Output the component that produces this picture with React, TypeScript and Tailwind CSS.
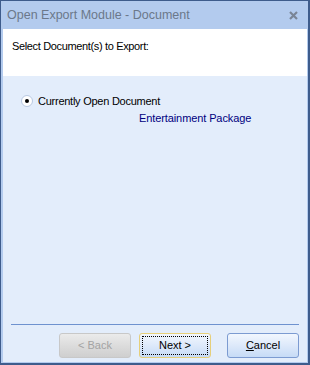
export default function App() {
  const font = { fontFamily: '"Liberation Sans", Arial, sans-serif' };
  return (
    <div
      className="w-[310px] h-[365px] flex flex-col bg-[#b3cbee] border-t border-l border-r-2 border-b-2 border-[#3e5c8c] pl-[2px] pr-[1px] pb-[1px]"
      style={font}
    >
      <div className="h-[28px] shrink-0 flex items-center justify-between pl-[4px] pr-[9px]">
        <span className="text-[12.5px] text-[#6b788a]">Open Export Module - Document</span>
        <svg width="9" height="9" viewBox="0 0 9 9" className="mt-[1px]">
          <path d="M1 1 L8 8 M8 1 L1 8" stroke="#7a8596" strokeWidth="2.2" />
        </svg>
      </div>
      <div className="h-[47px] shrink-0 bg-white pl-[9px] pt-[4px]">
        <span className="text-[11px] tracking-[-0.35px] text-black">Select Document(s) to Export:</span>
      </div>
      <div className="flex-1 flex flex-col bg-[#e3edfb]">
        <div className="flex items-center mt-[17px] ml-[18px] gap-[5px]">
          <span className="w-[12px] h-[12px] rounded-full bg-white border border-[#b9c9e2] flex items-center justify-center">
            <span className="w-[4px] h-[4px] rounded-full bg-black" />
          </span>
          <span className="text-[11px] tracking-[-0.25px] text-black">Currently Open Document</span>
        </div>
        <div className="ml-[136px] mt-0 text-[11px] tracking-[-0.1px] text-[#00007f]">Entertainment Package</div>
        <div className="flex-1" />
        <div className="mx-[8px] h-px bg-[#6e92cf]" />
        <div className="flex justify-end mt-[8px] mb-[4px] mr-[8px] text-[11px]">
          <button
            disabled
            className="w-[72px] h-[25px] rounded-[3px] border border-[#c8c8c8] bg-gradient-to-b from-[#ebebeb] via-[#dcdcdc] to-[#cfcfcf] text-[#a3a3a3]"
          >
            &lt; Back
          </button>
          <button className="ml-[8px] w-[72px] h-[25px] rounded-[3px] border border-[#e6cf7a] p-[2px] bg-gradient-to-b from-[#f2f7fe] via-[#dde9fa] to-[#c6dbf6] text-black">
            <span className="flex items-center justify-center w-full h-full border border-dotted border-black">
              Next &gt;
            </span>
          </button>
          <button className="ml-[16px] w-[72px] h-[25px] rounded-[3px] border border-[#7c9bd1] bg-gradient-to-b from-[#f2f7fe] via-[#dde9fa] to-[#c6dbf6] text-black">
            <span className="underline underline-offset-1">C</span>ancel
          </button>
        </div>
      </div>
    </div>
  );
}
